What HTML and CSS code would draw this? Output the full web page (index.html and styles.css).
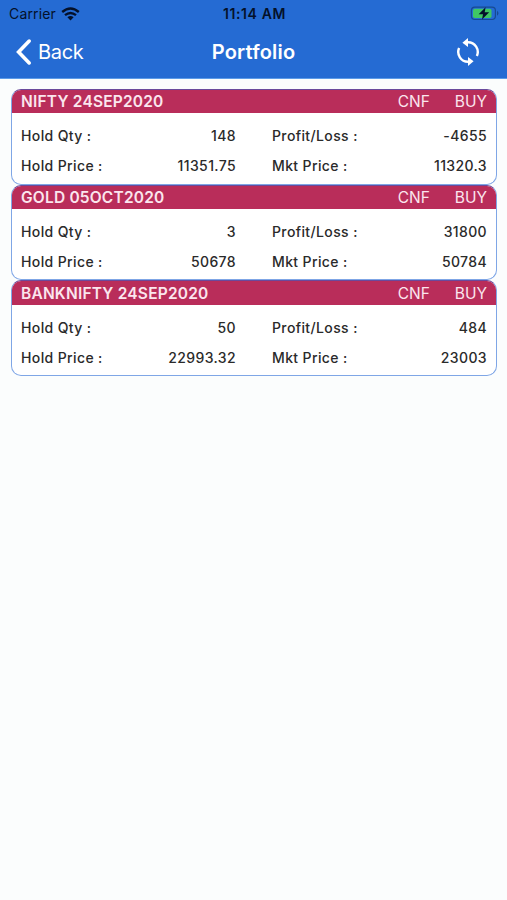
FILE: index.html
```html
<!DOCTYPE html>
<html lang="en">
<head>
    <meta charset="utf-8">
    <title>Portfolio</title>
    <link rel="stylesheet" href="styles.css">
</head>
<body>
    <header class="top-bar">
        <!-- Status bar -->
        <div class="status-bar">
            <div class="carrier">
                <span class="carrier-name">Carrier</span>
                <svg class="wifi-icon" width="19" height="14" viewBox="0 0 19 14">
                    <path d="M1.2 5Q9.5 -2 17.8 5M4 8.1Q9.5 3.7 15 8.1" fill="none" stroke="#04112a" stroke-width="2.4"/>
                    <path d="M6.4 10.2Q9.5 7.8 12.6 10.2L9.5 13.4Z" fill="#04112a"/>
                </svg>
            </div>
            <div class="clock">11:14 AM</div>
            <svg class="battery-icon" width="30" height="15" viewBox="0 0 30 15">
                <rect x="1.4" y="1.1" width="24" height="12.4" rx="3.4" fill="none" stroke="#174a92" stroke-width="1.2"/>
                <rect x="3" y="2.7" width="18.5" height="9.4" rx="1.8" fill="#3fc764"/>
                <path d="M27 4.8Q30 7.3 27 9.8Z" fill="#174a92"/>
                <path d="M15.6 1.2L8.6 8.3H13L12 13.4L19.2 6.2H14.7Z" fill="#04112a"/>
            </svg>
        </div>

        <!-- Navigation -->
        <nav class="nav-bar">
            <a class="back-link">
                <svg width="17" height="28" viewBox="0 0 17 28">
                    <path d="M14.2 3.1L3.6 14L14.2 24.9" fill="none" stroke="#fff" stroke-width="3.6" stroke-linecap="round"/>
                </svg>
                <span>Back</span>
            </a>
            <h1 class="page-title">Portfolio</h1>
            <a class="refresh-link">
                <svg width="24" height="30" viewBox="0 0 24 30">
                    <path d="M10 5.3H12A9.7 9.7 0 0 1 20.9 18.9M14 24.7H12A9.7 9.7 0 0 1 3.1 11.1" fill="none" stroke="#fff" stroke-width="2.4"/>
                    <path d="M6.4 5.7L12 0.9V10.1ZM17.6 24.3L12 19.9V29.1Z" fill="#fff"/>
                </svg>
            </a>
        </nav>
    </header>

    <main class="holdings">
        <section class="card">
            <div class="card-header">
                <span class="symbol">NIFTY 24SEP2020</span>
                <span class="tag">CNF</span>
                <span class="side">BUY</span>
            </div>
            <div class="card-body">
                <div class="field"><span>Hold Qty :</span><span>148</span></div>
                <div class="field"><span>Profit/Loss :</span><span>-4655</span></div>
                <div class="field"><span>Hold Price :</span><span>11351.75</span></div>
                <div class="field"><span>Mkt Price :</span><span>11320.3</span></div>
            </div>
        </section>

        <section class="card">
            <div class="card-header">
                <span class="symbol">GOLD 05OCT2020</span>
                <span class="tag">CNF</span>
                <span class="side">BUY</span>
            </div>
            <div class="card-body">
                <div class="field"><span>Hold Qty :</span><span>3</span></div>
                <div class="field"><span>Profit/Loss :</span><span>31800</span></div>
                <div class="field"><span>Hold Price :</span><span>50678</span></div>
                <div class="field"><span>Mkt Price :</span><span>50784</span></div>
            </div>
        </section>

        <section class="card">
            <div class="card-header">
                <span class="symbol">BANKNIFTY 24SEP2020</span>
                <span class="tag">CNF</span>
                <span class="side">BUY</span>
            </div>
            <div class="card-body">
                <div class="field"><span>Hold Qty :</span><span>50</span></div>
                <div class="field"><span>Profit/Loss :</span><span>484</span></div>
                <div class="field"><span>Hold Price :</span><span>22993.32</span></div>
                <div class="field"><span>Mkt Price :</span><span>23003</span></div>
            </div>
        </section>
    </main>
</body>
</html>
```

FILE: styles.css
```css
* {
    box-sizing: border-box;
}
body {
    margin: 0;
    min-height: 900px;
    background: #fbfdfd;
    font-family: Inter, Roboto, sans-serif;
    color: #2a2a2a;
}
.top-bar {
    height: 79px;
    background: #256bd3;
    border-bottom: 1px solid #5c9be8;
}
.status-bar {
    display: grid;
    grid-template-columns: 1fr auto 1fr;
    align-items: center;
    height: 27px;
    padding: 0 7px 0 9px;
    color: #04112a;
    font-size: 14px;
}
.carrier {
    display: flex;
    align-items: center;
    gap: 5px;
}
.carrier-name {
    letter-spacing: 0.15px;
}
.clock {
    font-weight: 600;
    font-size: 14px;
    letter-spacing: 0.6px;
}
.battery-icon {
    justify-self: end;
}
.nav-bar {
    display: grid;
    grid-template-columns: 1fr auto 1fr;
    align-items: center;
    height: 50px;
    padding: 0 27px 0 15px;
    color: #fff;
}
.back-link {
    display: flex;
    align-items: center;
    gap: 6px;
    font-size: 20px;
    letter-spacing: -0.3px;
}
.page-title {
    margin: 0;
    padding-left: 12px;
    font-size: 20px;
    font-weight: 600;
    letter-spacing: 0.2px;
}
.refresh-link {
    display: flex;
    justify-self: end;
}
.holdings {
    padding: 10px 10px 0 11px;
}
.card {
    height: 95.7px;
    background: #fff;
    border: 1px solid #7fa6e6;
    border-top-color: #6a4a9c;
    border-radius: 10px;
    overflow: hidden;
}
.card-header {
    display: flex;
    align-items: center;
    height: 23.4px;
    padding: 0 9px;
    background: #b92d5a;
    color: #fbe6ee;
    font-size: 15.5px;
}
.symbol {
    flex: 1;
    font-weight: 600;
    letter-spacing: 0.2px;
}
.tag {
    margin-right: 25px;
}
.card-body {
    display: grid;
    grid-template-columns: 215px 215px;
    justify-content: space-between;
    padding: 7.4px 9px 0;
    font-size: 14px;
    font-weight: 500;
    letter-spacing: 0.38px;
}
.field {
    display: flex;
    align-items: center;
    justify-content: space-between;
    height: 30px;
}
```
